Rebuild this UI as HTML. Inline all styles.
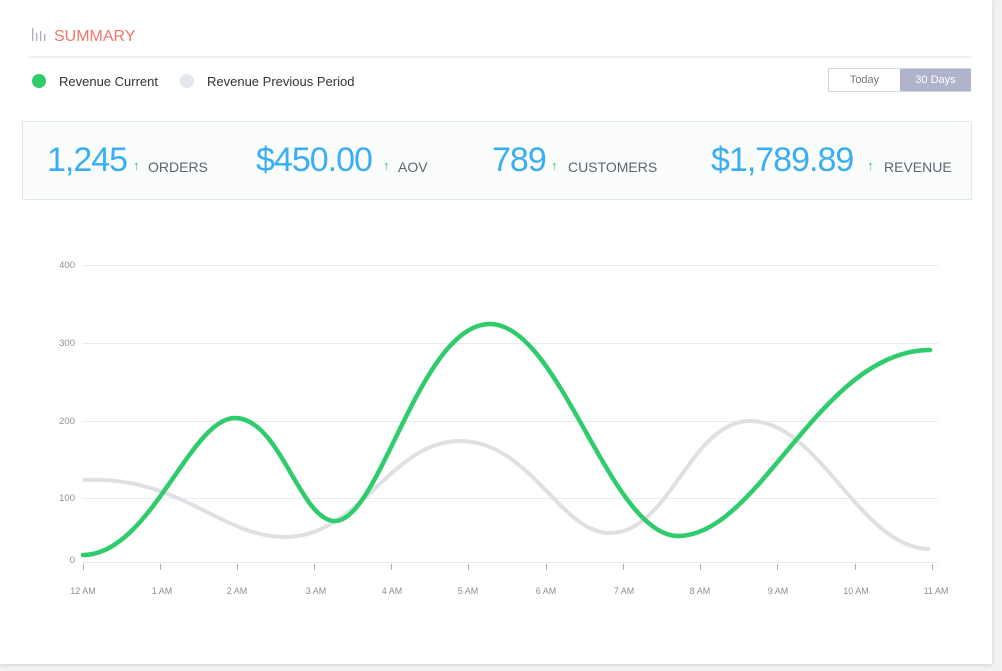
<!DOCTYPE html>
<html><head><meta charset="utf-8"><style>
body{margin:0;width:1002px;height:671px;background:#f2f2f2;font-family:"Liberation Sans",sans-serif;position:relative;overflow:hidden}
.card{position:absolute;left:0;top:0;width:992px;height:664px;background:#fff;box-shadow:0 1px 4px rgba(0,0,0,.15)}
.a{position:absolute;white-space:nowrap}
.num{color:#3aaef4;font-size:34px;font-weight:300;letter-spacing:-1px}
.lbl{color:#5f6470;font-size:14px}
.up{color:#2ecc71;font-size:13px}
</style></head><body>
<div class="card">
<svg class="a" style="left:31px;top:28px" width="16" height="14"><g fill="#a8adb8"><rect x="1" y="0" width="1.3" height="13"/><rect x="5" y="5" width="1.3" height="8"/><rect x="9" y="3" width="1.3" height="10"/><rect x="13" y="6" width="1.3" height="7"/></g></svg>
<div class="a" style="left:54px;top:28px;color:#f2766b;font-size:16px">SUMMARY</div>
<div class="a" style="left:29px;top:56px;width:943px;height:2px;background:#eef0f2"></div>
<div class="a" style="left:32px;top:74px;width:14px;height:14px;border-radius:50%;background:#2ecc6a"></div>
<div class="a" style="left:59px;top:74px;font-size:13px;color:#333">Revenue Current</div>
<div class="a" style="left:180px;top:74px;width:14px;height:14px;border-radius:50%;background:#e2e8ee"></div>
<div class="a" style="left:207px;top:74px;font-size:13px;color:#333">Revenue Previous Period</div>
<div class="a" style="left:828px;top:68px;width:143px;height:24px;border:1px solid #cfd6e0;box-sizing:border-box"></div>
<div class="a" style="left:829px;top:74px;width:71px;text-align:center;font-size:11px;color:#777">Today</div>
<div class="a" style="left:900px;top:69px;width:71px;height:22px;background:#b0b4ca"></div>
<div class="a" style="left:900px;top:74px;width:71px;text-align:center;font-size:11px;color:#fff">30 Days</div>
<div class="a" style="left:22px;top:121px;width:950px;height:79px;border:1px solid #e1e9ee;background:#fbfcfc;box-sizing:border-box"></div>
<div class="a num" style="left:47px;top:141px">1,245</div><div class="a up" style="left:133px;top:158px">↑</div><div class="a lbl" style="left:148px;top:159px">ORDERS</div>
<div class="a num" style="left:256px;top:141px">$450.00</div><div class="a up" style="left:383px;top:158px">↑</div><div class="a lbl" style="left:398px;top:159px">AOV</div>
<div class="a num" style="left:492px;top:141px">789</div><div class="a up" style="left:551px;top:158px">↑</div><div class="a lbl" style="left:568px;top:159px">CUSTOMERS</div>
<div class="a num" style="left:711px;top:141px">$1,789.89</div><div class="a up" style="left:867px;top:158px">↑</div><div class="a lbl" style="left:884px;top:159px">REVENUE</div>
<svg class="a" style="left:0;top:0" width="992" height="664" font-family="Liberation Sans" font-size="9.5" fill="#8a8f99">
<g stroke="#e6edf2" stroke-width="1">
<line x1="82" y1="265.5" x2="938" y2="265.5"/><line x1="82" y1="343.5" x2="938" y2="343.5"/><line x1="82" y1="421.5" x2="938" y2="421.5"/><line x1="82" y1="498.5" x2="938" y2="498.5"/><line x1="82" y1="562.5" x2="938" y2="562.5"/></g>
<g text-anchor="end"><text x="75" y="268">400</text><text x="75" y="346">300</text><text x="75" y="424">200</text><text x="75" y="501">100</text><text x="75" y="563">0</text></g>
<g stroke="#a8adbc"><line x1="83.5" y1="564" x2="83.5" y2="570"/><line x1="160.5" y1="564" x2="160.5" y2="570"/><line x1="237.5" y1="564" x2="237.5" y2="570"/><line x1="314.5" y1="564" x2="314.5" y2="570"/><line x1="391.5" y1="564" x2="391.5" y2="570"/><line x1="468.5" y1="564" x2="468.5" y2="570"/><line x1="546.5" y1="564" x2="546.5" y2="570"/><line x1="623.5" y1="564" x2="623.5" y2="570"/><line x1="700.5" y1="564" x2="700.5" y2="570"/><line x1="777.5" y1="564" x2="777.5" y2="570"/><line x1="855.5" y1="564" x2="855.5" y2="570"/><line x1="932.5" y1="564" x2="932.5" y2="570"/></g>
<g text-anchor="middle" font-size="9"><text x="83" y="594">12 AM</text><text x="162" y="594">1 AM</text><text x="237" y="594">2 AM</text><text x="316" y="594">3 AM</text><text x="392" y="594">4 AM</text><text x="468" y="594">5 AM</text><text x="546" y="594">6 AM</text><text x="624" y="594">7 AM</text><text x="700" y="594">8 AM</text><text x="778" y="594">9 AM</text><text x="856" y="594">10 AM</text><text x="936" y="594">11 AM</text></g>
<path d="M83,480 C180,475 220,537 285,537 C360,537 390,441 460,441 C530,441 560,533 610,533 C670,533 690,421 750,421 C820,421 860,549 930,549" fill="none" stroke="#dfe0e3" stroke-width="4"/>
<path d="M83,555 C150,555 190,418 235,418 C280,418 300,521 335,521 C380,521 420,324 490,324 C560,324 610,536 678,536 C760,536 820,350 930,350" fill="none" stroke="#2ecc6a" stroke-width="4.5" stroke-linecap="round"/>
</svg>
</div>
</body></html>
